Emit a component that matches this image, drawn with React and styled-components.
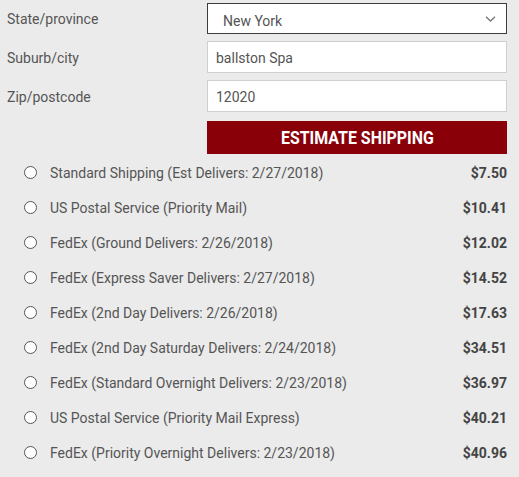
import React from "react";
import styled, { createGlobalStyle } from "styled-components";

const rates = [
  { id: 1, label: "Standard Shipping (Est Delivers: 2/27/2018)", price: "$7.50" },
  { id: 2, label: "US Postal Service (Priority Mail)", price: "$10.41" },
  { id: 3, label: "FedEx (Ground Delivers: 2/26/2018)", price: "$12.02" },
  { id: 4, label: "FedEx (Express Saver Delivers: 2/27/2018)", price: "$14.52" },
  { id: 5, label: "FedEx (2nd Day Delivers: 2/26/2018)", price: "$17.63" },
  { id: 6, label: "FedEx (2nd Day Saturday Delivers: 2/24/2018)", price: "$34.51" },
  { id: 7, label: "FedEx (Standard Overnight Delivers: 2/23/2018)", price: "$36.97" },
  { id: 8, label: "US Postal Service (Priority Mail Express)", price: "$40.21" },
  { id: 9, label: "FedEx (Priority Overnight Delivers: 2/23/2018)", price: "$40.96" },
];

export default function App() {
  return (
    <>
      <GlobalStyle />
      <Page>
        <Form>
          <Label>State/province</Label>
          <Select>
            <span>New York</span>
            <svg width="11" height="6" viewBox="0 0 11 6">
              <path d="M1 0.8 L5.5 5 L10 0.8" fill="none" stroke="#777" strokeWidth="1.3" />
            </svg>
          </Select>
          <Label>Suburb/city</Label>
          <Input defaultValue="ballston Spa" />
          <Label>Zip/postcode</Label>
          <Input defaultValue="12020" />
          <span />
          <Button>
            <ButtonText>ESTIMATE SHIPPING</ButtonText>
          </Button>
        </Form>
        <List>
          {rates.map((rate) => (
            <Rate key={rate.id}>
              <Radio />
              <RateLabel>{rate.label}</RateLabel>
              <Price>{rate.price}</Price>
            </Rate>
          ))}
        </List>
      </Page>
    </>
  );
}

const GlobalStyle = createGlobalStyle`
  body {
    margin: 0;
    background: #ebebeb;
    font-family: Roboto, "Liberation Sans", sans-serif;
    color: #555;
  }
`;
const Page = styled.div`
  width: 519px;
  height: 477px;
  padding: 3px 12px 0 7px;
  box-sizing: border-box;
`;
const Form = styled.div`
  display: grid;
  grid-template-columns: 200px 300px;
  row-gap: 8px;
  align-items: center;
`;
const Label = styled.div`
  font-size: 14px;
  margin-top: 0;
`;
const Select = styled.div`
  height: 31px;
  box-sizing: border-box;
  border: 1.5px solid #3c3c3c;
  background: #fff;
  display: flex;
  align-items: center;
  justify-content: space-between;
  padding: 0 10px 0 15px;
  font-size: 14px;
  color: #555;

  span {
    padding-top: 5px;
  }
`;
const Input = styled.input`
  height: 32px;
  box-sizing: border-box;
  border: 1px solid #cfcfcf;
  background: #fff;
  padding: 2px 8px 0;
  font-family: Roboto, "Liberation Sans", sans-serif;
  font-size: 14px;
  color: #555;
  outline: none;
  margin-top: -1px;
`;
const Button = styled.div`
  height: 33px;
  background: #8a0008;
  display: flex;
  align-items: center;
  justify-content: center;
  margin-top: 1px;
`;
const ButtonText = styled.span`
  display: inline-block;
  color: #fff;
  font-weight: 700;
  font-size: 18px;
  transform: scaleX(0.885);
`;
const List = styled.div`
  display: flex;
  flex-direction: column;
  padding: 1px 0 0 17px;
`;
const Rate = styled.div`
  height: 35px;
  display: flex;
  align-items: center;
`;
const Radio = styled.span`
  width: 11px;
  height: 11px;
  border: 1.3px solid #555;
  border-radius: 50%;
  background: #fff;
  flex: none;
`;
const RateLabel = styled.span`
  margin-left: 13px;
  flex: 1;
  font-size: 14px;
  color: #555;
`;
const Price = styled.span`
  font-size: 14px;
  font-weight: 700;
  color: #444;
`;
